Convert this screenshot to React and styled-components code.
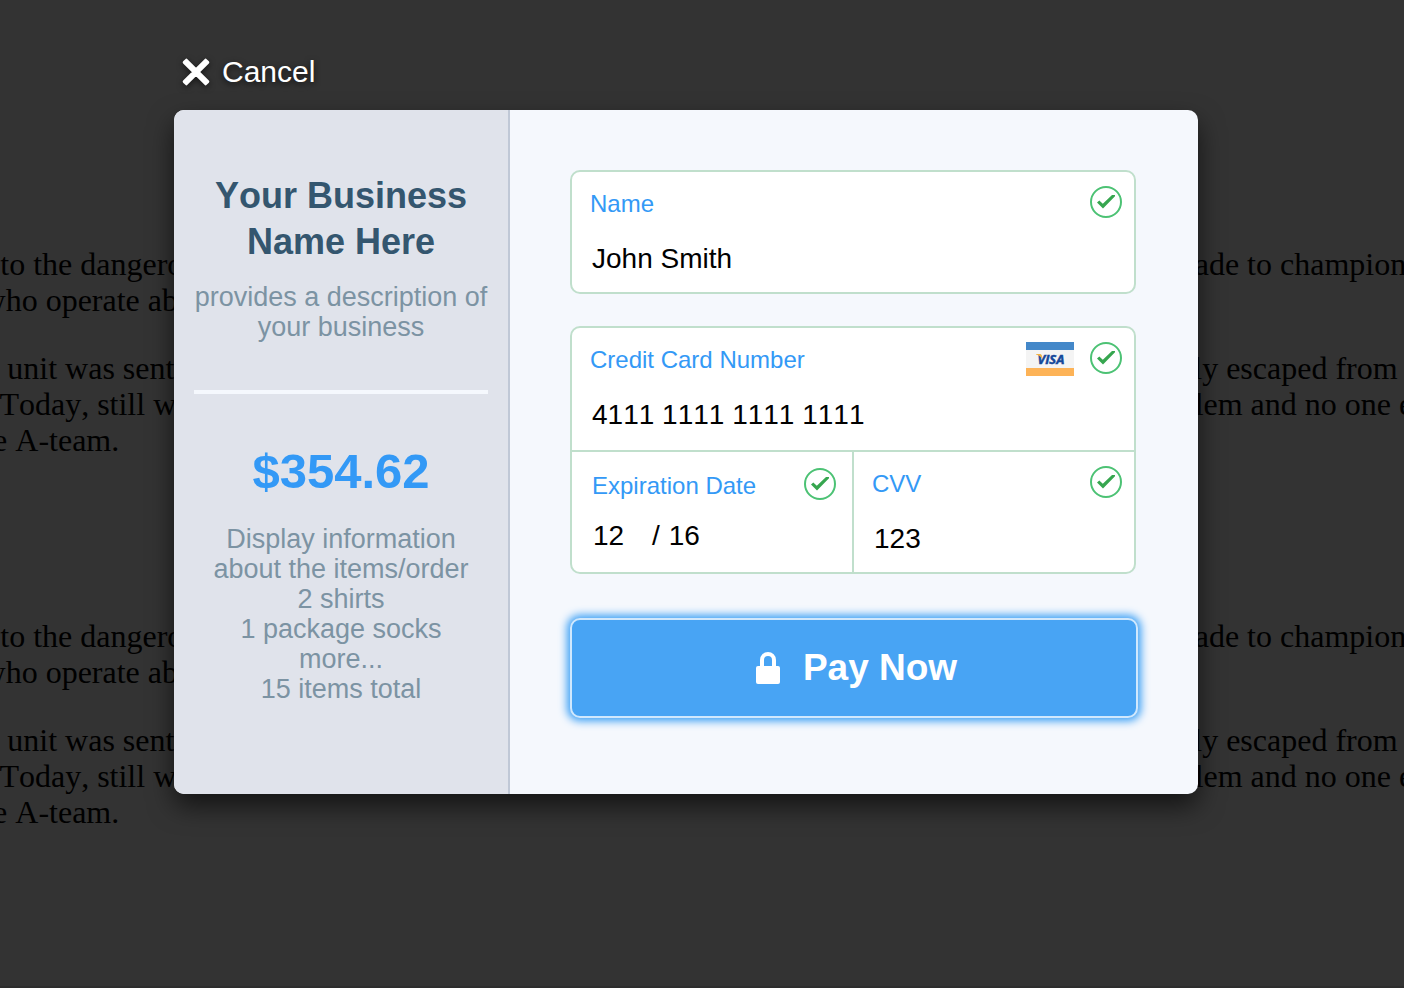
import React from "react";
import styled, { createGlobalStyle } from "styled-components";

const GlobalStyle = createGlobalStyle`
  * { box-sizing: border-box; }
  body {
    margin: 0;
    background: #333333;
    font-family: "Liberation Sans", Arial, sans-serif;
  }
`;

const Page = styled.div`
  position: relative;
  min-height: 100vh;
  overflow: hidden;
  border-bottom: 2px solid #2d2d2d;
`;

const Story = styled.div`
  position: absolute;
  inset: 0;
  padding-top: 246px;
  margin-left: -349px;
  overflow: hidden;
  font-family: "Liberation Serif", "Times New Roman", serif;
  font-size: 32px;
  font-kerning: none;
  line-height: 36px;
  color: #000000;
  white-space: nowrap;
`;

const StorySection = styled.section`
  margin-bottom: 160px;
`;

const Paragraph = styled.p`
  margin: 0 0 32px;
`;

const Overlay = styled.main`
  position: relative;
  display: flex;
  flex-direction: column;
  align-items: center;
  padding: 52px 48px 48px 16px;
`;

const Dialog = styled.div`
  width: 100%;
  max-width: 1024px;
`;

const CancelButton = styled.button`
  display: flex;
  align-items: center;
  gap: 12px;
  height: 40px;
  margin: 0 0 18px;
  padding: 0 8px;
  border: 0;
  background: none;
  color: #ffffff;
  font: 30px "Liberation Sans", Arial, sans-serif;
  text-shadow: 0 2px 6px rgba(0, 0, 0, 0.7);
  cursor: pointer;

  svg {
    filter: drop-shadow(0 2px 3px rgba(0, 0, 0, 0.6));
  }
`;

const Card = styled.div`
  display: flex;
  border-radius: 10px;
  overflow: hidden;
  background: #f5f8fd;
  box-shadow: 0 12px 26px rgba(0, 0, 0, 0.6);
`;

const Summary = styled.aside`
  flex: 0 1 336px;
  padding: 63px 20px 90px;
  border-right: 2px solid #c0c8d6;
  background: #e0e3eb;
  text-align: center;
`;

const BusinessName = styled.h1`
  margin: 0 0 17px;
  font-size: 36px;
  font-kerning: none;
  line-height: 46px;
  color: #34566f;
`;

const Details = styled.p`
  margin: 0;
  font-size: 27px;
  line-height: 30px;
  color: #7c93a3;
`;

const Rule = styled.hr`
  height: 4px;
  margin: 48px 0 50px;
  border: 0;
  background: #f5f8fd;
`;

const Price = styled.p`
  margin: 0 0 26px;
  font-size: 49px;
  line-height: 54px;
  font-weight: bold;
  color: #3399f6;
`;

const PaymentForm = styled.form`
  flex: 1;
  min-width: 0;
  padding: 60px;
`;

const FieldGroup = styled.div`
  margin: 0 2px 32px 0;
  border: 2px solid #c0dfcc;
  border-radius: 10px;
  background: #ffffff;
`;

const SplitRow = styled.div`
  display: flex;
  border-top: 2px solid #c0dfcc;
`;

const Field = styled.div`
  flex: 1;
  min-width: 0;
  height: ${(p) => (p.$tall ? 122 : 120)}px;
  padding: 14px 12px 0 18px;
`;

const ExpiryField = styled(Field)`
  flex: 0 0 calc(50% + 1px);
  padding: 16px 16px 0 20px;
  border-right: 2px solid #c0dfcc;
`;

const FieldHeader = styled.div`
  display: flex;
  align-items: flex-start;
  gap: 16px;
  height: 32px;
  margin-bottom: ${(p) => (p.$compact ? 18 : 22)}px;
`;

const Label = styled.label`
  flex: 1;
  font-size: 24px;
  line-height: 36px;
  color: #3399f6;
  white-space: nowrap;
`;

const inputBase = `
  border: 0;
  outline: 0;
  background: none;
  color: #000000;
  font: 28px "Liberation Sans", Arial, sans-serif;
  font-kerning: none;
`;

const TextInput = styled.input`
  ${inputBase}
  display: block;
  width: 100%;
  height: 38px;
  padding: 0 2px;
`;

const ExpiryInputs = styled.div`
  display: flex;
  align-items: center;
  font-size: 28px;
`;

const ShortInput = styled.input`
  ${inputBase}
  width: 60px;
  height: 36px;
  padding: 0 1px;
`;

const Slash = styled.span`
  margin-right: 8px;
`;

const PayButton = styled.button`
  display: flex;
  align-items: center;
  justify-content: center;
  gap: 22px;
  width: 100%;
  height: 100px;
  margin-top: 44px;
  padding: 0 0 0 4px;
  border: 2px solid #d0e8fd;
  border-radius: 10px;
  background: #48a4f4;
  box-shadow: 0 0 8px 3px #3a9ff5;
  color: #ffffff;
  font: bold 37px "Liberation Sans", Arial, sans-serif;
  cursor: pointer;
`;

const VisaMark = () => (
  <svg width="48" height="34" viewBox="0 0 48 34" role="img" aria-label="Visa">
    <rect width="48" height="34" fill="#f4f4f4" />
    <rect width="48" height="8" fill="#4488c9" />
    <rect y="26" width="48" height="8" fill="#fdb357" />
    <text
      x="25"
      y="22"
      textAnchor="middle"
      fontFamily="Open Sans, sans-serif"
      fontSize="13"
      fontWeight="bold"
      fontStyle="italic"
      fill="#15489a"
      stroke="#15489a"
      strokeWidth="0.5"
    >
      VISA
    </text>
    <path d="M10 12H14Q15.500 12 15.800 13.500L16.300 17Q14.500 13.500 10 12.500Z" fill="#f3b340" />
  </svg>
);

const ValidMark = () => (
  <svg width="32" height="32" viewBox="0 0 32 32" aria-hidden="true">
    <circle cx="16" cy="16" r="15" fill="#ffffff" stroke="#4cc274" strokeWidth="2" />
    <path d="M7 16.500L9.300 14.500L12.800 17.800L22 9H25V10.200L13 22.500Z" fill="#36a64f" />
  </svg>
);

const CloseIcon = () => (
  <svg width="28" height="28" viewBox="0 0 28 28" aria-hidden="true">
    <path
      d="M2.200 4.400L4.400 2.200L14 11.800L23.600 2.200L25.800 4.400L16.200 14L25.800 23.600L23.600 25.800L14 16.200L4.400 25.800L2.200 23.600L11.800 14Z"
      fill="#ffffff"
      stroke="#ffffff"
      strokeWidth="3"
      strokeLinejoin="round"
    />
  </svg>
);

const LockIcon = () => (
  <svg width="26" height="32" viewBox="0 0 26 32" aria-hidden="true">
    <path d="M7 15V8a6 6 0 0 1 12 0v7" fill="none" stroke="#ffffff" strokeWidth="4" />
    <rect x="1" y="14" width="24" height="18" rx="2" fill="#ffffff" />
  </svg>
);

const StoryText = () => (
  <StorySection>
    <Paragraph>
      Ryder: a shadowy flight in to the dangerous world of a man who does not exist. Michael
      Knight, a young loner on a crusade to champion the cause of the innocent
      <br />
      in this world of criminals who operate above the law.
    </Paragraph>
    <Paragraph>
      In 1972 a crack commando unit was sent to prison by a military court for a crime they
      didn't commit. These men promptly escaped from a maximum security stockade to the
      <br />
      Los Angeles underground. Today, still wanted by the government, they survive as soldiers of
      fortune. If you have a problem and no one else can help, find them or
      <br />
      else maybe you can hire the A-team.
    </Paragraph>
  </StorySection>
);

export default function App() {
  return (
    <>
      <GlobalStyle />
      <Page>
        <Story>
          <StoryText />
          <StoryText />
        </Story>
        <Overlay>
          <Dialog role="dialog" aria-label="Payment">
            <CancelButton type="button">
              <CloseIcon />
              Cancel
            </CancelButton>
            <Card>
              <Summary>
                <BusinessName>Your Business Name Here</BusinessName>
                <Details>provides a description of your business</Details>
                <Rule />
                <Price>$354.62</Price>
                <Details>
                  Display information about the items/order
                  <br />
                  2 shirts
                  <br />
                  1 package socks
                  <br />
                  more...
                  <br />
                  15 items total
                </Details>
              </Summary>
              <PaymentForm onSubmit={(e) => e.preventDefault()}>
                <FieldGroup>
                  <Field>
                    <FieldHeader>
                      <Label htmlFor="name">Name</Label>
                      <ValidMark />
                    </FieldHeader>
                    <TextInput id="name" defaultValue="John Smith" />
                  </Field>
                </FieldGroup>
                <FieldGroup>
                  <Field $tall>
                    <FieldHeader>
                      <Label htmlFor="card">Credit Card Number</Label>
                      <VisaMark />
                      <ValidMark />
                    </FieldHeader>
                    <TextInput id="card" defaultValue="4111 1111 1111 1111" />
                  </Field>
                  <SplitRow>
                    <ExpiryField>
                      <FieldHeader $compact>
                        <Label htmlFor="month">Expiration Date</Label>
                        <ValidMark />
                      </FieldHeader>
                      <ExpiryInputs>
                        <ShortInput id="month" defaultValue="12" />
                        <Slash>/</Slash>
                        <ShortInput aria-label="Expiration year" defaultValue="16" />
                      </ExpiryInputs>
                    </ExpiryField>
                    <Field>
                      <FieldHeader>
                        <Label htmlFor="cvv">CVV</Label>
                        <ValidMark />
                      </FieldHeader>
                      <TextInput id="cvv" defaultValue="123" />
                    </Field>
                  </SplitRow>
                </FieldGroup>
                <PayButton type="submit">
                  <LockIcon />
                  Pay Now
                </PayButton>
              </PaymentForm>
            </Card>
          </Dialog>
        </Overlay>
      </Page>
    </>
  );
}
